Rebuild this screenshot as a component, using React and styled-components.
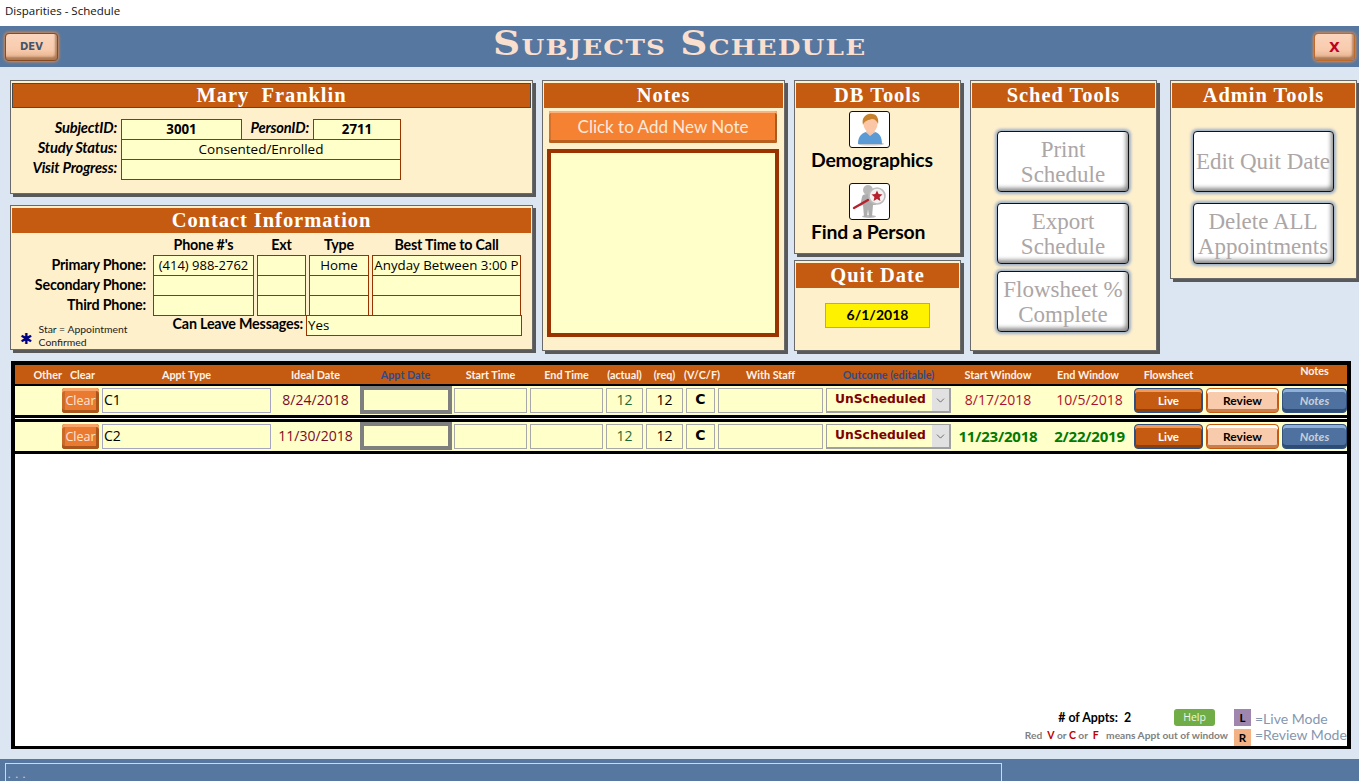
import React from 'react';
import styled, { createGlobalStyle, css } from 'styled-components';
import { ChevronDown } from 'lucide-react';

const GlobalStyle = createGlobalStyle`
  html, body, #root {
    margin: 0;
    padding: 0;
    height: 100%;
    overflow: hidden;
  }
  body {
    background: #fff;
    font-family: "Lato", "Open Sans", sans-serif;
    color: #000;
  }
  * { box-sizing: border-box; }
`;

const ORANGE = '#c55a11';
const RUST = '#993300';
const CREAM = '#fff0cc';
const PALE = '#ffffc9';
const BLUE = '#56779f';
const SERIF = '"Liberation Serif", "DejaVu Serif", serif';
const BODY = '"Open Sans", "Noto Sans", sans-serif';

const Page = styled.div`
  display: flex;
  flex-direction: column;
  height: 781px;
  width: 1359px;
`;

const TitleBar = styled.div`
  height: 26px;
  padding: 3px 0 0 5px;
  background: #fff;
  font: 11.5px/16px ${BODY};
  color: #111;
`;

const HeaderBar = styled.header`
  height: 41px;
  background: ${BLUE};
  display: grid;
  grid-template-columns: 1fr auto 1fr;
  align-items: start;
  padding: 7px 4px 0 5px;
`;

const Title = styled.h1`
  margin: 0;
  font: bold 33px/22px "DejaVu Serif", serif;
  font-variant: small-caps;
  transform: scaleX(1.14);
  color: #fadfce;
  letter-spacing: 1px;
  white-space: nowrap;
`;

const HeadButton = styled.div`
  justify-self: ${(p) => (p.$right ? 'end' : 'start')};
  width: ${(p) => (p.$right ? '41px' : '53px')};
  height: 28px;
  border: 1px solid ${(p) => (p.$right ? '#c06a2a' : '#8a4a20')};
  border-radius: 4px;
  background: linear-gradient(180deg, #fbd5bd 0%, #f8cbad 60%, #e0ab88 100%);
  box-shadow: 0 0 3px 1px #d98a52, inset -2px -3px 2px rgba(120, 70, 30, 0.5);
  display: flex;
  align-items: center;
  justify-content: center;
  font: bold ${(p) => (p.$right ? '14px' : '10px')}/1 "DejaVu Sans", sans-serif;
  color: ${(p) => (p.$right ? '#c00020' : '#44546a')};
`;

const Main = styled.main`
  flex: 1;
  background: #dce6f2;
  padding: 13px 0 10px 10px;
  display: flex;
  flex-direction: column;
  gap: 10px;
  min-height: 0;
`;

const TopRow = styled.section`
  display: flex;
  align-items: flex-start;
  gap: 9px;
`;

const Column = styled.div`
  display: flex;
  flex-direction: column;
  gap: ${(p) => p.$gap}px;
  width: ${(p) => p.$width}px;
`;

const Panel = styled.div`
  width: ${(p) => (p.$width ? `${p.$width}px` : '100%')};
  height: ${(p) => p.$height}px;
  margin-left: ${(p) => p.$offset || 0}px;
  background: ${CREAM};
  border: 1px solid #6a6a6a;
  box-shadow: 3px 3px 0 #595959;
  padding: 2px 1px 0;
`;

const PanelHead = styled.div`
  height: 25px;
  background: ${ORANGE};
  color: #fff;
  font: bold 20.5px/25px ${SERIF};
  letter-spacing: 0.95px;
  text-align: center;
  white-space: nowrap;
  ${(p) => p.$ruled && css`border: 1px solid #4a4a4a; line-height: 23px;`}
`;

const SubjectGrid = styled.div`
  display: grid;
  grid-template-columns: 109px 121px 71px 88px;
  grid-auto-rows: 20px;
  margin-top: 11px;
`;

const FieldLabel = styled.div`
  font: ${(p) => (p.$italic ? 'italic bold 14.7px/17px' : 'bold 14.3px/20px')} "Lato", sans-serif;
  text-align: right;
  padding-right: 4px;
  white-space: nowrap;
  letter-spacing: -0.2px;
`;

const Box = styled.div`
  height: 21px;
  background: ${PALE};
  border: 1px solid ${RUST};
  font: ${(p) => (p.$bold ? 'bold' : 'normal')} ${(p) => p.$size || 13.3}px/19px ${BODY};
  text-align: center;
  white-space: nowrap;
  overflow: hidden;
  grid-column: ${(p) => p.$span || 'auto'};
`;

const ContactGrid = styled.div`
  display: grid;
  grid-template-columns: 137px 101px 49px 60px 149px;
  column-gap: 3px;
  grid-auto-rows: 20px;
  margin-left: 1px;
`;

const ColumnHead = styled.div`
  font: bold 14.3px/20px "Lato", sans-serif;
  text-align: center;
  white-space: nowrap;
  letter-spacing: -0.2px;
`;

const HeadRow = styled(ContactGrid)`
  padding-top: 2px;
`;

const MessageRow = styled.div`
  display: flex;
  align-items: flex-start;
  padding-left: 8px;
`;

const StarNote = styled.div`
  width: 152px;
  display: flex;
  align-items: flex-end;
  gap: 6px;
  padding-top: 8px;
`;

const Star = styled.span`
  font: 900 15px/14px "DejaVu Sans", sans-serif;
  color: #000080;
  margin-bottom: 2px;
`;

const StarText = styled.div`
  font: 10.4px/12.5px "Lato", sans-serif;
  color: #222;
`;

const MessageLabel = styled(FieldLabel)`
  width: 132px;
  padding-right: 0;
  margin-left: -1px;
  line-height: 18px;
`;

const MessageBox = styled(Box)`
  width: 216px;
  margin-left: 3px;
  text-align: left;
  padding-left: 1px;
`;

const AddNote = styled.div`
  width: 228px;
  height: 32px;
  margin: 3px 0 6px 5px;
  border-radius: 2px;
  background: #f58232;
  box-shadow: inset 0 2px 0 #fbb27d, inset 0 -3px 0 #b9601f, inset 2px 0 0 #d4702a, inset -2px 0 0 #a95a20;
  color: #fce9dc;
  font: 17px/31px "Lato", sans-serif;
  text-align: center;
`;

const NoteArea = styled.div`
  width: 232px;
  height: 188px;
  margin-left: 3px;
  background: ${PALE};
  border: 4px solid ${RUST};
`;

const ToolStack = styled.div`
  display: flex;
  flex-direction: column;
  align-items: flex-start;
  padding: 3px 0 0 15px;
`;

const IconButton = styled.div`
  width: 41px;
  height: 37px;
  margin-left: 38px;
  background: #fff;
  border: 1px solid #111;
  border-radius: 3px;
  display: flex;
  align-items: center;
  justify-content: center;
`;

const ToolLabel = styled.div`
  font: bold 19.4px/24px "Lato", sans-serif;
  height: 35px;
  white-space: nowrap;
  letter-spacing: -0.2px;
`;

const QuitBox = styled.div`
  width: 105px;
  height: 25px;
  margin: 15px auto 0;
  background: #fff200;
  border: 1px solid #a6a6a6;
  font: bold 14px/22px "Lato", sans-serif;
  text-align: center;
`;

const GhostStack = styled.div`
  display: flex;
  flex-direction: column;
  align-items: center;
  padding: 23px 1px 0 0;
`;

const GhostButton = styled.div`
  width: ${(p) => p.$width}px;
  height: 61px;
  margin-top: ${(p) => p.$top || 0}px;
  background: #fff;
  border: 1px solid #111;
  border-radius: 4px;
  box-shadow: 0 0 3px 2px #9db0c8, inset -3px -4px 4px -1px #8a8a8a;
  color: #aca6a6;
  font: 23px/25px ${SERIF};
  text-align: center;
  display: flex;
  align-items: center;
  justify-content: center;
  white-space: pre-line;
  overflow: hidden;
`;

const Schedule = styled.section`
  flex: 1;
  width: 1340px;
  margin-left: 1px;
  border: 4px solid #000;
  border-bottom-width: 3px;
  background: #fff;
  display: flex;
  flex-direction: column;
  min-height: 0;
`;

const columns = '44px 37px 169px 83px 91px 73px 73px 37px 37px 29px 105px 125px 88px 86px 69px 73px 65px';

const HeadGrid = styled.div`
  display: grid;
  grid-template-columns: ${columns};
  column-gap: 3px;
  height: 19px;
  background: ${ORANGE};
`;

const HeadCell = styled.div`
  color: ${(p) => (p.$blue ? '#2f4a8a' : '#fff3e8')};
  font: bold 10.8px/${(p) => (p.$high ? '12px' : '20px')} "Lato", sans-serif;
  text-align: ${(p) => (p.$right ? 'right' : 'center')};
  margin-right: ${(p) => (p.$right ? '-3px' : '0')};
  margin-left: ${(p) => p.$nudge || 0}px;
  white-space: nowrap;
`;

const RowGroup = styled.div`
  background: #000;
  padding-bottom: 3px;
  flex: none;
`;

const WhiteLine = styled.div`
  height: 1px;
  background: #fff;
`;

const Row = styled.div`
  display: grid;
  grid-template-columns: ${columns};
  column-gap: 3px;
  align-items: center;
  height: 29px;
  background: ${PALE};
  margin-top: ${(p) => (p.$first ? 2 : 3)}px;
`;

const Cell = styled.div`
  height: 25px;
  background: ${PALE};
  border: 1px solid ${(p) => (p.$tint ? '#a6a6c0' : '#a8a8a8')};
  font: ${(p) => (p.$bold ? 'bold ' : '')}14px/21px ${(p) => (p.$bold ? '"DejaVu Sans"' : '"Open Sans"')}, sans-serif;
  color: ${(p) => p.$color || '#000'};
  text-align: ${(p) => p.$align || 'center'};
  padding: 0 ${(p) => (p.$align === 'left' ? '1px' : '0')};
  overflow: hidden;
  white-space: nowrap;
`;

const DateText = styled.div`
  font: ${(p) => (p.$bold ? 'bold 15px' : '14px')}/22px "Open Sans", sans-serif;
  color: ${(p) => p.$color};
  text-align: center;
  padding: 0 0 2px ${(p) => p.$inset || 0}px;
  white-space: nowrap;
  letter-spacing: ${(p) => (p.$bold ? '-0.2px' : '0')};
`;

const ApptDate = styled.div`
  height: 28px;
  width: 92px;
  margin-bottom: 1px;
  background: ${PALE};
  border: 4px solid #7f7f7f;
`;

const Outcome = styled.div`
  height: 25px;
  display: flex;
  background: ${PALE};
  border: 2px solid #a0a0a0;
  border-left-width: 1px;
  border-top-width: 1px;
  overflow: hidden;
`;

const OutcomeText = styled.div`
  flex: 1;
  padding-left: 8px;
  font: bold 12.3px/21px "DejaVu Sans", sans-serif;
  color: #7f0000;
  white-space: nowrap;
`;

const OutcomeArrow = styled.div`
  flex: none;
  width: 17px;
  background: #e1e1e1;
  display: flex;
  align-items: center;
  justify-content: center;
  color: #555;
`;

const bevel = {
  clear: css`
    border-radius: 3px;
    background: #ea7a30;
    box-shadow: inset 0 3px 0 #f8a468, inset 0 -3px 0 #a9551c, inset 3px 0 0 #c96a28, inset -3px 0 0 #a9551c;
    color: #fde6d4;
    font: 12.5px/25px "Open Sans", sans-serif;
  `,
  live: css`
    border-radius: 4px;
    background: ${ORANGE};
    border: 1px solid #2f4f7f;
    box-shadow: inset 0 3px 0 #f09a5c, inset 0 -3px 0 #8c400c, inset 1px 0 0 #2f4f7f, inset -1px 0 0 #2f4f7f;
    color: #fff;
    font: bold 11.5px/24px "Lato", sans-serif;
  `,
  review: css`
    border-radius: 4px;
    background: #f8cbad;
    border: 1px solid ${ORANGE};
    box-shadow: inset 0 3px 0 #fff, inset 0 -3px 0 #c97f4c, inset 1px 0 0 ${ORANGE}, inset -1px 0 0 ${ORANGE};
    color: #000;
    font: bold 12px/24px "Lato", sans-serif;
  `,
  notes: css`
    border-radius: 4px;
    background: #4f719f;
    border: 1px solid #33527c;
    box-shadow: inset 0 3px 0 #8fb0d8, inset 0 -3px 0 #2f4c74;
    color: #c6cfd9;
    font: italic bold 12px/24px "Lato", sans-serif;
  `,
};

const RowButton = styled.div`
  height: 25px;
  text-align: center;
  ${(p) => bevel[p.$kind]}
`;

const Footer = styled.div`
  margin-top: auto;
  display: flex;
  justify-content: flex-end;
  align-items: flex-start;
  gap: 6px;
  height: 37px;
`;

const Counts = styled.div`
  display: flex;
  flex-direction: column;
  align-items: flex-end;
`;

const CountRow = styled.div`
  display: flex;
  align-items: center;
  height: 17px;
  font: bold 12.4px/16px "Lato", sans-serif;
  padding-right: 13px;
`;

const CountValue = styled.span`
  width: 50px;
  margin-left: 6px;
`;

const HelpButton = styled.div`
  width: 41px;
  height: 17px;
  border-radius: 3px;
  background: #70ad47;
  color: #eef7e6;
  font: 10.5px/17px "Open Sans", sans-serif;
  text-align: center;
`;

const WindowNote = styled.div`
  margin-top: 1px;
  font: bold 10.2px/16px "Lato", sans-serif;
  color: #808080;
  white-space: pre;
`;

const Bad = styled.span`
  color: #c00000;
  font-size: 10.5px;
`;

const Legend = styled.div`
  display: grid;
  grid-template-columns: 17px auto;
  column-gap: 4px;
  row-gap: 3px;
  width: 113px;
`;

const Swatch = styled.div`
  height: 17px;
  background: ${(p) => p.$color};
  font: bold 11.5px/18px "Lato", sans-serif;
  text-align: center;
`;

const LegendText = styled.div`
  font: 14px/15px "Lato", sans-serif;
  color: #8497b0;
  white-space: nowrap;
  margin-top: ${(p) => p.$shift}px;
`;

const StatusBar = styled.footer`
  height: 22px;
  background: ${BLUE};
  padding: 4px 0 0 5px;
`;

const StatusBox = styled.div`
  width: 997px;
  height: 18px;
  border: 1px solid #e3d3cb;
  border-bottom: 0;
  padding-left: 2px;
  color: #e8c8b8;
  font: bold 10px/20px "Lato", sans-serif;
  letter-spacing: 5px;
`;

const PersonIcon = () => (
  <svg width="30" height="33" viewBox="0 0 30 33">
    <ellipse cx="16" cy="31" rx="13" ry="1.6" fill="#c9c9c9" />
    <path d="M3 31c0-8 4-11 8-12l4 3 5-3c4 1 7 4 7 12z" fill="#5b9bd5" />
    <path d="M11 19l4 4 5-4-1-3h-7z" fill="#f5c4a8" />
    <ellipse cx="15.5" cy="11" rx="7" ry="8.5" fill="#fbc6a6" />
    <path d="M8 12C6 4 12 0 17 1c5 0 7 5 6 10-1-3-3-5-6-5-3 1-7 1-9 6z" fill="#c8822c" />
  </svg>
);

const FindIcon = () => (
  <svg width="36" height="35" viewBox="0 0 36 35">
    <ellipse cx="17" cy="32.5" rx="7" ry="1.4" fill="#bbb" />
    <circle cx="16" cy="6" r="5" fill="#b8b8b8" />
    <path d="M10 13c0-2 2-3 6-3s6 1 7 3l1 8h-3l-1 12h-3l-1-8-1 8h-3l-1-12-3 1z" fill="#adadad" />
    <path d="M2 24l14-8" stroke="#b5212c" strokeWidth="2.4" strokeLinecap="round" />
    <circle cx="25" cy="12" r="8" fill="#f2f2f2" stroke="#bdbdbd" strokeWidth="1.6" />
    <path d="M25 6.5l1.6 3.6 3.9.4-2.9 2.6.8 3.8-3.4-2-3.4 2 .8-3.8-2.9-2.6 3.9-.4z" fill="#b5212c" />
  </svg>
);

const appts = [
  { type: 'C1', ideal: '8/24/2018', start: '8/17/2018', end: '10/5/2018', inWindow: false },
  { type: 'C2', ideal: '11/30/2018', start: '11/23/2018', end: '2/22/2019', inWindow: true },
];

const headers = [
  ['Other', { $right: true }], ['Clear', { $nudge: 4 }], ['Appt Type'], ['Ideal Date'], ['Appt Date', { $blue: true }],
  ['Start Time'], ['End Time'], ['(actual)'], ['(req)'], ['(V/C/F)', { $nudge: -2 }], ['With Staff'],
  ['Outcome (editable)', { $blue: true }], ['Start Window'], ['End Window'], ['Flowsheet'], [''], ['Notes', { $high: true }],
];

const ghostsSched = [['Print\nSchedule', 0], ['Export\nSchedule', 11], ['Flowsheet %\nComplete', 7]];
const ghostsAdmin = [['Edit Quit Date', 0], ['Delete ALL\nAppointments', 11]];

function ApptRow({ appt, first }) {
  const good = appt.inWindow;
  const windowColor = good ? '#007a00' : '#b0102c';
  return (
    <Row $first={first}>
      <span />
      <RowButton $kind="clear">Clear</RowButton>
      <Cell $align="left" $tint>{appt.type}</Cell>
      <DateText $color="#7a0a2a">{appt.ideal}</DateText>
      <ApptDate />
      <Cell />
      <Cell />
      <Cell $color="#1f6b3a">12</Cell>
      <Cell>12</Cell>
      <Cell $bold>C</Cell>
      <Cell />
      <Outcome>
        <OutcomeText>UnScheduled</OutcomeText>
        <OutcomeArrow><ChevronDown size={13} strokeWidth={1.5} /></OutcomeArrow>
      </Outcome>
      <DateText $color={windowColor} $bold={good}>{appt.start}</DateText>
      <DateText $color={windowColor} $bold={good} $inset={3}>{appt.end}</DateText>
      <RowButton $kind="live">Live</RowButton>
      <RowButton $kind="review">Review</RowButton>
      <RowButton $kind="notes">Notes</RowButton>
    </Row>
  );
}

export default function App() {
  return (
    <Page>
      <GlobalStyle />
      <TitleBar>Disparities - Schedule</TitleBar>
      <HeaderBar>
        <HeadButton>DEV</HeadButton>
        <Title>Subjects Schedule</Title>
        <HeadButton $right>X</HeadButton>
      </HeaderBar>
      <Main>
        <TopRow>
          <Column $width={523} $gap={11}>
            <Panel $height={114}>
              <PanelHead $ruled>Mary&nbsp;&nbsp;Franklin</PanelHead>
              <SubjectGrid>
                <FieldLabel $italic>SubjectID:</FieldLabel>
                <Box $bold>3001</Box>
                <FieldLabel $italic>PersonID:</FieldLabel>
                <Box $bold>2711</Box>
                <FieldLabel $italic>Study Status:</FieldLabel>
                <Box $span="span 3" $size={13.5}>Consented/Enrolled</Box>
                <FieldLabel $italic>Visit Progress:</FieldLabel>
                <Box $span="span 3" />
              </SubjectGrid>
            </Panel>
            <Panel $height={145}>
              <PanelHead>Contact Information</PanelHead>
              <HeadRow>
                <span />
                <ColumnHead>Phone #'s</ColumnHead>
                <ColumnHead>Ext</ColumnHead>
                <ColumnHead>Type</ColumnHead>
                <ColumnHead>Best Time to Call</ColumnHead>
              </HeadRow>
              <ContactGrid>
                <FieldLabel>Primary Phone:</FieldLabel>
                <Box $size={13}>(414) 988-2762</Box>
                <Box />
                <Box>Home</Box>
                <Box>Anyday Between 3:00 P</Box>
                <FieldLabel>Secondary Phone:</FieldLabel>
                <Box /><Box /><Box /><Box />
                <FieldLabel>Third Phone:</FieldLabel>
                <Box /><Box /><Box /><Box />
              </ContactGrid>
              <MessageRow>
                <StarNote>
                  <Star>✱</Star>
                  <StarText>Star = Appointment<br />Confirmed</StarText>
                </StarNote>
                <MessageLabel>Can Leave Messages:</MessageLabel>
                <MessageBox>Yes</MessageBox>
              </MessageRow>
            </Panel>
          </Column>
          <Panel $width={243} $height={271}>
            <PanelHead>Notes</PanelHead>
            <AddNote>Click to Add New Note</AddNote>
            <NoteArea />
          </Panel>
          <Column $width={167} $gap={6}>
            <Panel $height={174}>
              <PanelHead>DB Tools</PanelHead>
              <ToolStack>
                <IconButton><PersonIcon /></IconButton>
                <ToolLabel>Demographics</ToolLabel>
                <IconButton><FindIcon /></IconButton>
                <ToolLabel>Find a Person</ToolLabel>
              </ToolStack>
            </Panel>
            <Panel $height={91}>
              <PanelHead>Quit Date</PanelHead>
              <QuitBox>6/1/2018</QuitBox>
            </Panel>
          </Column>
          <Panel $width={187} $height={271}>
            <PanelHead>Sched Tools</PanelHead>
            <GhostStack>
              {ghostsSched.map(([label, top]) => (
                <GhostButton key={label} $width={132} $top={top}>{label}</GhostButton>
              ))}
            </GhostStack>
          </Panel>
          <Panel $width={187} $height={199} $offset={4}>
            <PanelHead>Admin Tools</PanelHead>
            <GhostStack>
              {ghostsAdmin.map(([label, top]) => (
                <GhostButton key={label} $width={141} $top={top}>{label}</GhostButton>
              ))}
            </GhostStack>
          </Panel>
        </TopRow>
        <Schedule>
          <HeadGrid>
            {headers.map(([label, props], i) => (
              <HeadCell key={i} {...props}>{label}</HeadCell>
            ))}
          </HeadGrid>
          {appts.map((a, i) => (
            <RowGroup key={a.type}>
              {i > 0 ? <WhiteLine /> : null}
              <ApptRow appt={a} first={i === 0} />
            </RowGroup>
          ))}
          <Footer>
            <Counts>
              <CountRow>
                # of Appts:
                <CountValue>2</CountValue>
                <HelpButton>Help</HelpButton>
              </CountRow>
              <WindowNote>
                Red  <Bad>V</Bad> or <Bad>C</Bad> or  <Bad>F</Bad>   means Appt out of window
              </WindowNote>
            </Counts>
            <Legend>
              <Swatch $color="#9e86af">L</Swatch>
              <LegendText $shift={2}>=Live Mode</LegendText>
              <Swatch $color="#f4b183">R</Swatch>
              <LegendText $shift={-2}>=Review Mode</LegendText>
            </Legend>
          </Footer>
        </Schedule>
      </Main>
      <StatusBar>
        <StatusBox>...</StatusBox>
      </StatusBar>
    </Page>
  );
}
